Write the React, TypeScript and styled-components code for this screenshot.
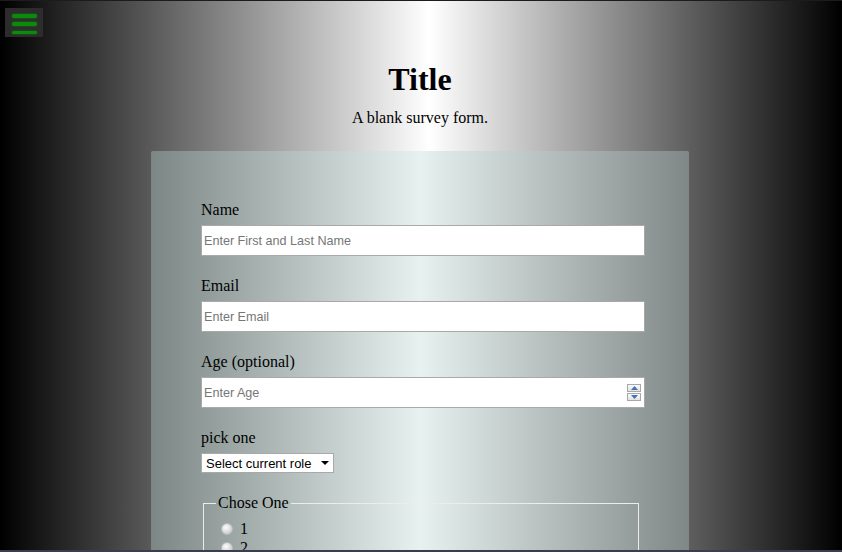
import React from 'react';
import styled, { createGlobalStyle } from 'styled-components';

const GlobalStyle = createGlobalStyle`
  html, body {
    margin: 0;
    padding: 0;
    height: 100%;
  }
  body {
    font-family: "Liberation Serif", "Times New Roman", serif;
    font-size: 16px;
    color: #000;
    overflow: hidden;
  }
`;

const Page = styled.div`
  box-sizing: border-box;
  height: 100vh;
  overflow: hidden;
  padding-right: 2px;
  background: linear-gradient(to right, #000 0%, #fff 51%, #000 100%);
  border-top: 1px solid #1c1c1c;
  border-bottom: 2px solid #3b3d4a;
`;

const MenuButton = styled.button`
  position: fixed;
  top: 8px;
  left: 5px;
  width: 38px;
  height: 29px;
  padding: 6px 6px 3px 7px;
  border: none;
  background: #2c2c2c;
  display: flex;
  flex-direction: column;
  justify-content: space-between;
  cursor: pointer;
`;

const MenuBar = styled.span`
  display: block;
  height: 3.5px;
  border-radius: 2px;
  background: #0b8a0b;
  box-shadow: 0 0 2px #0b8a0b;
`;

const Header = styled.header`
  padding-top: 60px;
  text-align: center;
`;

const Title = styled.h1`
  margin: 0;
  font-size: 32px;
  font-weight: bold;
  line-height: 37px;
`;

const Subtitle = styled.p`
  margin: 11px 0 0;
  font-size: 16px;
  line-height: 18px;
`;

const Panel = styled.form`
  box-sizing: border-box;
  width: 538px;
  margin: 24px auto 0;
  padding: 50px 44px 40px 50px;
  border-radius: 2px 2px 0 0;
  background: linear-gradient(to right, #7c8785 0%, #e7f1f0 50%, #7f8886 100%);
`;

const Group = styled.div`
  margin-bottom: 21px;
`;

const Label = styled.label`
  display: block;
  font-size: 16px;
  line-height: 18px;
  margin-bottom: 6px;
`;

const TextInput = styled.input`
  box-sizing: border-box;
  display: block;
  width: 100%;
  height: 31px;
  margin: 0;
  padding: 0 2px;
  border: 1px solid #a9a9a9;
  border-radius: 0;
  background: #fff;
  font-family: "Liberation Sans", Arial, sans-serif;
  font-size: 12.6px;
  outline: none;
  -moz-appearance: textfield;

  &::placeholder {
    color: #767676;
  }
  &::-webkit-inner-spin-button,
  &::-webkit-outer-spin-button {
    -webkit-appearance: none;
    margin: 0;
  }
`;

const InputWrap = styled.div`
  position: relative;
`;

const Spinner = styled.div`
  position: absolute;
  top: 7px;
  right: 4px;
  width: 14px;
  height: 17px;
  display: flex;
  flex-direction: column;
  gap: 1px;
`;

const SpinBtn = styled.span`
  flex: 1;
  box-sizing: border-box;
  border: 1px solid #a8a8a8;
  background: linear-gradient(#fafafa, #e2e2e2);
  display: flex;
  align-items: center;
  justify-content: center;
`;

const SelectWrap = styled.div`
  position: relative;
  display: inline-block;
`;

const Select = styled.select`
  box-sizing: border-box;
  appearance: none;
  height: 20px;
  width: 133px;
  padding: 0 0 0 4px;
  margin: 0;
  border: 1px solid #a9a9a9;
  border-radius: 0;
  background: #fff;
  font-family: "Liberation Sans", Arial, sans-serif;
  font-size: 13px;
  color: #000;
  outline: none;
`;

const SelectArrow = styled.span`
  position: absolute;
  top: 8px;
  right: 5px;
  width: 0;
  height: 0;
  border-left: 4px solid transparent;
  border-right: 4px solid transparent;
  border-top: 4px solid #000;
  pointer-events: none;
`;

const Fieldset = styled.fieldset`
  box-sizing: border-box;
  width: 436px;
  margin: 19px 0 0 2px;
  padding: 7px 12px 10px;
  border: 1px solid #ececec;
`;

const Legend = styled.legend`
  padding: 0 2px;
  font-size: 16px;
  line-height: 18px;
`;

const RadioRow = styled.label`
  display: flex;
  align-items: center;
  height: 19px;
  font-size: 16px;
`;

const Radio = styled.input`
  appearance: none;
  width: 12px;
  height: 12px;
  margin: 0 7px 0 5px;
  border-radius: 50%;
  border: 1px solid #b9b9b9;
  background: radial-gradient(circle at 40% 35%, #fdfdfd, #cfcfcf 70%, #bdbdbd);
`;

const SpinUp = () => (
  <svg width="7" height="4" viewBox="0 0 7 4">
    <path d="M0 4 L3.5 0 L7 4 Z" fill="#4a6fb5" />
  </svg>
);

const SpinDown = () => (
  <svg width="7" height="4" viewBox="0 0 7 4">
    <path d="M0 0 L3.5 4 L7 0 Z" fill="#4a6fb5" />
  </svg>
);

export default function App() {
  return (
    <>
      <GlobalStyle />
      <Page>
        <MenuButton type="button" aria-label="menu">
          <MenuBar />
          <MenuBar />
          <MenuBar />
        </MenuButton>
        <Header>
          <Title>Title</Title>
          <Subtitle>A blank survey form.</Subtitle>
        </Header>
        <Panel onSubmit={(e) => e.preventDefault()}>
          <Group>
            <Label htmlFor="name">Name</Label>
            <TextInput id="name" type="text" placeholder="Enter First and Last Name" />
          </Group>
          <Group>
            <Label htmlFor="email">Email</Label>
            <TextInput id="email" type="email" placeholder="Enter Email" />
          </Group>
          <Group>
            <Label htmlFor="age">Age (optional)</Label>
            <InputWrap>
              <TextInput id="age" type="number" placeholder="Enter Age" />
              <Spinner>
                <SpinBtn><SpinUp /></SpinBtn>
                <SpinBtn><SpinDown /></SpinBtn>
              </Spinner>
            </InputWrap>
          </Group>
          <Group>
            <Label htmlFor="role">pick one</Label>
            <SelectWrap>
              <Select id="role" defaultValue="">
                <option value="">Select current role</option>
                <option value="student">Student</option>
                <option value="job">Full Time Job</option>
                <option value="other">Other</option>
              </Select>
              <SelectArrow />
            </SelectWrap>
          </Group>
          <Fieldset>
            <Legend>Chose One</Legend>
            <RadioRow>
              <Radio type="radio" name="pick" value="1" />1
            </RadioRow>
            <RadioRow>
              <Radio type="radio" name="pick" value="2" />2
            </RadioRow>
            <RadioRow>
              <Radio type="radio" name="pick" value="3" />3
            </RadioRow>
          </Fieldset>
        </Panel>
      </Page>
    </>
  );
}
